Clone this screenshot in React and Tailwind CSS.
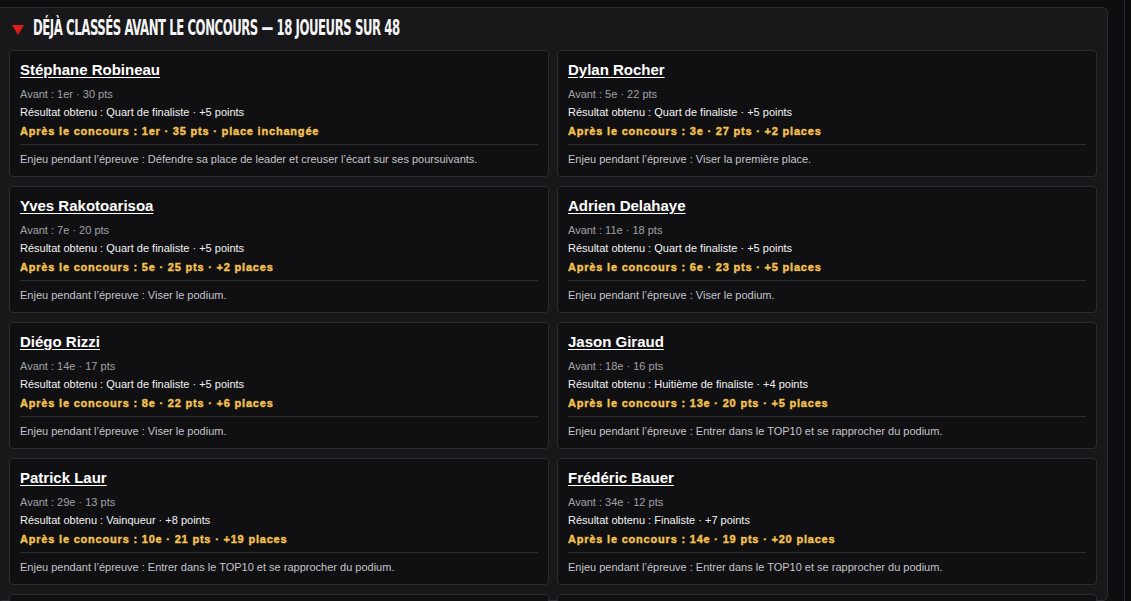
import React from 'react';

const players = [
  { name: 'Stéphane Robineau', avant: '1er · 30 pts', res: 'Quart de finaliste · +5 points', apres: '1er · 35 pts · place inchangée', enjeu: 'Défendre sa place de leader et creuser l’écart sur ses poursuivants.' },
  { name: 'Dylan Rocher', avant: '5e · 22 pts', res: 'Quart de finaliste · +5 points', apres: '3e · 27 pts · +2 places', enjeu: 'Viser la première place.' },
  { name: 'Yves Rakotoarisoa', avant: '7e · 20 pts', res: 'Quart de finaliste · +5 points', apres: '5e · 25 pts · +2 places', enjeu: 'Viser le podium.' },
  { name: 'Adrien Delahaye', avant: '11e · 18 pts', res: 'Quart de finaliste · +5 points', apres: '6e · 23 pts · +5 places', enjeu: 'Viser le podium.' },
  { name: 'Diégo Rizzi', avant: '14e · 17 pts', res: 'Quart de finaliste · +5 points', apres: '8e · 22 pts · +6 places', enjeu: 'Viser le podium.' },
  { name: 'Jason Giraud', avant: '18e · 16 pts', res: 'Huitième de finaliste · +4 points', apres: '13e · 20 pts · +5 places', enjeu: 'Entrer dans le TOP10 et se rapprocher du podium.' },
  { name: 'Patrick Laur', avant: '29e · 13 pts', res: 'Vainqueur · +8 points', apres: '10e · 21 pts · +19 places', enjeu: 'Entrer dans le TOP10 et se rapprocher du podium.' },
  { name: 'Frédéric Bauer', avant: '34e · 12 pts', res: 'Finaliste · +7 points', apres: '14e · 19 pts · +20 places', enjeu: 'Entrer dans le TOP10 et se rapprocher du podium.' },
  { name: 'Henri Lacroix', avant: '40e · 10 pts', res: 'Quart de finaliste · +5 points', apres: '20e · 15 pts · +20 places', enjeu: 'Entrer dans le TOP20.' },
  { name: 'Bruno Le Boursicaud', avant: '42e · 10 pts', res: 'Huitième de finaliste · +4 points', apres: '22e · 14 pts · +20 places', enjeu: 'Entrer dans le TOP20.' },
];

function PlayerCard({ p }) {
  return (
    <div className="h-[127px] rounded-[4px] border border-[#2c2c31] bg-[#101013] px-[10px] pt-[9px]">
      <div className="text-[15px] font-bold leading-[20px] text-white underline underline-offset-[2px]">{p.name}</div>
      <div className="mt-[5px] text-[11px] leading-[18px] text-[#a0a0a5]">Avant : {p.avant}</div>
      <div className="text-[11px] leading-[19px] text-[#f2f2f2]">Résultat obtenu : {p.res}</div>
      <div className="text-[11px] font-black leading-[19px] tracking-[0.8px] text-[#f3c24f] [-webkit-text-stroke:0.4px_#f3c24f]">
        Après le concours : {p.apres}
      </div>
      <div className="mt-[3px] border-t border-[#2c2c31] pt-[5px] text-[11px] leading-[19px] text-[#c4c4c8]">
        Enjeu pendant l’épreuve : {p.enjeu}
      </div>
    </div>
  );
}

export default function App() {
  return (
    <div className="flex h-[601px] overflow-hidden bg-[#0e0e10] font-['Liberation_Sans',Arial,sans-serif]">
      <div className="-ml-[3px] mt-[7px] w-[1111px] shrink-0 rounded-[5px] border border-[#2c2c31] bg-[#18181b] pl-[11px] pr-[10px]">
        <div className="flex h-[42px] items-center gap-[9px] pl-[3px]">
          <svg width="12" height="10" viewBox="0 0 12 10" className="mt-[1px] shrink-0">
            <polygon points="0,0 12,0 6,10" fill="#e01b1b" />
          </svg>
          <span className="inline-block origin-left whitespace-nowrap font-['DejaVu_Sans_Condensed','DejaVu_Sans',sans-serif] text-[21px] font-bold uppercase tracking-[-0.7px] text-[#f4f4f4] [font-stretch:condensed] [transform:scaleX(0.62)]">
            Déjà classés avant le concours — 18 joueurs sur 48
          </span>
        </div>
        <div className="grid grid-cols-2 gap-x-[8px] gap-y-[9px]">
          {players.map((p) => (
            <PlayerCard key={p.name} p={p} />
          ))}
        </div>
      </div>
      <div className="ml-[16px] flex-1 border-l border-[#2a2a2e] bg-[#0b0b0c]" />
    </div>
  );
}
